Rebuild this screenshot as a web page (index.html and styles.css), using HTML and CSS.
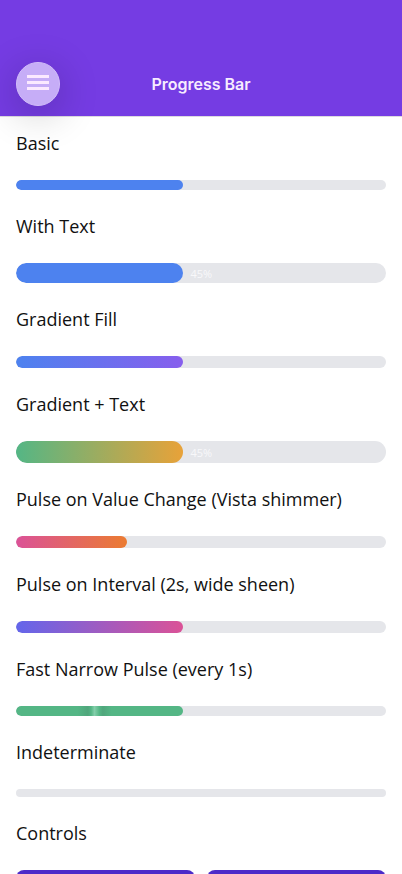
FILE: index.html
```html
<!DOCTYPE html>
<html lang="en">
<head>
    <meta charset="UTF-8">
    <meta name="viewport" content="width=device-width, initial-scale=1.0">
    <title>Progress Bar</title>
    <link rel="stylesheet" href="styles.css">
</head>
<body>

<header class="header">
    <button class="menu-button" type="button" aria-label="Menu">
        <svg width="22" height="16" viewBox="0 0 22 16" aria-hidden="true">
            <path d="M0 1.5h22M0 7.5h22M0 13.5h22" fill="none" stroke="#fbe9ff" stroke-width="3"/>
        </svg>
    </button>
    <h1>Progress Bar</h1>
</header>

<main class="content">
    <label for="basic">Basic</label>
    <progress id="basic" class="bar bar-medium" value="45" max="100"></progress>

    <label for="withText">With Text</label>
    <div class="bar-text">
        <progress id="withText" class="bar bar-text-small" value="45" max="100"></progress>
        <span class="bar-value">45%</span>
    </div>

    <label for="gradient">Gradient Fill</label>
    <progress id="gradient" class="bar bar-thick blue-purple" value="45" max="100"></progress>

    <label for="gradientText">Gradient + Text</label>
    <div class="bar-text">
        <progress id="gradientText" class="bar bar-text-large green-amber" value="45" max="100"></progress>
        <span class="bar-value">45%</span>
    </div>

    <label for="pulseChange">Pulse on Value Change (Vista shimmer)</label>
    <progress id="pulseChange" class="bar bar-thick pink-orange" value="30" max="100"></progress>

    <label for="pulseInterval">Pulse on Interval (2s, wide sheen)</label>
    <progress id="pulseInterval" class="bar bar-thick indigo-pink" value="45" max="100"></progress>

    <label for="pulseFast">Fast Narrow Pulse (every 1s)</label>
    <progress id="pulseFast" class="bar bar-medium green-pulse" value="45" max="100"></progress>

    <label for="indeterminate">Indeterminate</label>
    <progress id="indeterminate" class="bar bar-thin" value="0" max="100"></progress>

    <!-- Controls -->
    <h2>Controls</h2>
    <div class="controls">
        <button type="button" aria-label="Decrease"></button>
        <button type="button" aria-label="Increase"></button>
    </div>
</main>

</body>
</html>
```
FILE: styles.css
```css
* {
    box-sizing: border-box;
}
body {
    margin: 0;
    background-color: #fff;
    color: #111;
    font-family: "Open Sans", "Noto Sans", sans-serif;
}
.header {
    display: grid;
    grid-template-columns: 44px 1fr 44px;
    align-items: center;
    padding: 62px 16px 10px;
    background-color: #753ce3;
    box-shadow: 0 1px 0 #dcdae0;
}
.header h1 {
    margin: 0;
    text-align: center;
    font-family: Inter, sans-serif;
    font-size: 16px;
    font-weight: 600;
    line-height: 22px;
    color: #f7ecff;
}
.menu-button {
    display: flex;
    align-items: center;
    justify-content: center;
    width: 44px;
    height: 44px;
    padding: 0 0 2px;
    border: 1px solid #d2bdf9;
    border-radius: 50%;
    background-color: #c6adf7;
    box-shadow: 0 8px 40px rgba(0, 0, 0, 0.24);
    cursor: pointer;
}
.content {
    display: flex;
    flex-direction: column;
    gap: 24px;
    padding: 15px 16px 24px;
}
label, h2 {
    margin: 0;
    font-size: 18px;
    font-weight: 400;
    line-height: 25px;
}
.bar {
    display: block;
    width: 100%;
    border: none;
    border-radius: 12px;
    overflow: hidden;
    appearance: none;
    background-color: #e5e6ea;
}
.bar::-webkit-progress-bar {
    background-color: #e5e6ea;
}
.bar::-webkit-progress-value {
    border-radius: 12px;
    background: #4d82ef;
}
.bar-thin {
    height: 8px;
}
.bar-medium {
    height: 10px;
}
.bar-thick {
    height: 12px;
}
.bar-text-small {
    height: 20px;
}
.bar-text-large {
    height: 22px;
}
.blue-purple::-webkit-progress-value {
    background: linear-gradient(90deg, #4d82ef, #875eed);
}
.green-amber::-webkit-progress-value {
    background: linear-gradient(90deg, #54b685, #e8a239);
}
.pink-orange::-webkit-progress-value {
    background: linear-gradient(90deg, #db5297, #eb7b31);
}
.indigo-pink::-webkit-progress-value {
    background: linear-gradient(90deg, #6366eb, #db5297);
}
.green-pulse::-webkit-progress-value {
    background: linear-gradient(90deg, #54b685 37%, #50a67c 43%, #54b685 45%, #83ceaa 47%, #54b685 50%, #50a67c 52%, #54b685 57%);
}
.bar-text {
    position: relative;
}
/* value sits just after the filled part */
.bar-value {
    position: absolute;
    top: 0;
    bottom: 0;
    left: 45%;
    display: flex;
    align-items: center;
    padding-left: 8px;
    font-size: 11px;
    color: #f8f8fa;
}
.controls {
    display: grid;
    grid-template-columns: 1fr 1fr;
    gap: 12px;
}
.controls button {
    height: 44px;
    border: none;
    border-radius: 8px;
    background-color: #4c2bc9;
    cursor: pointer;
}
```
